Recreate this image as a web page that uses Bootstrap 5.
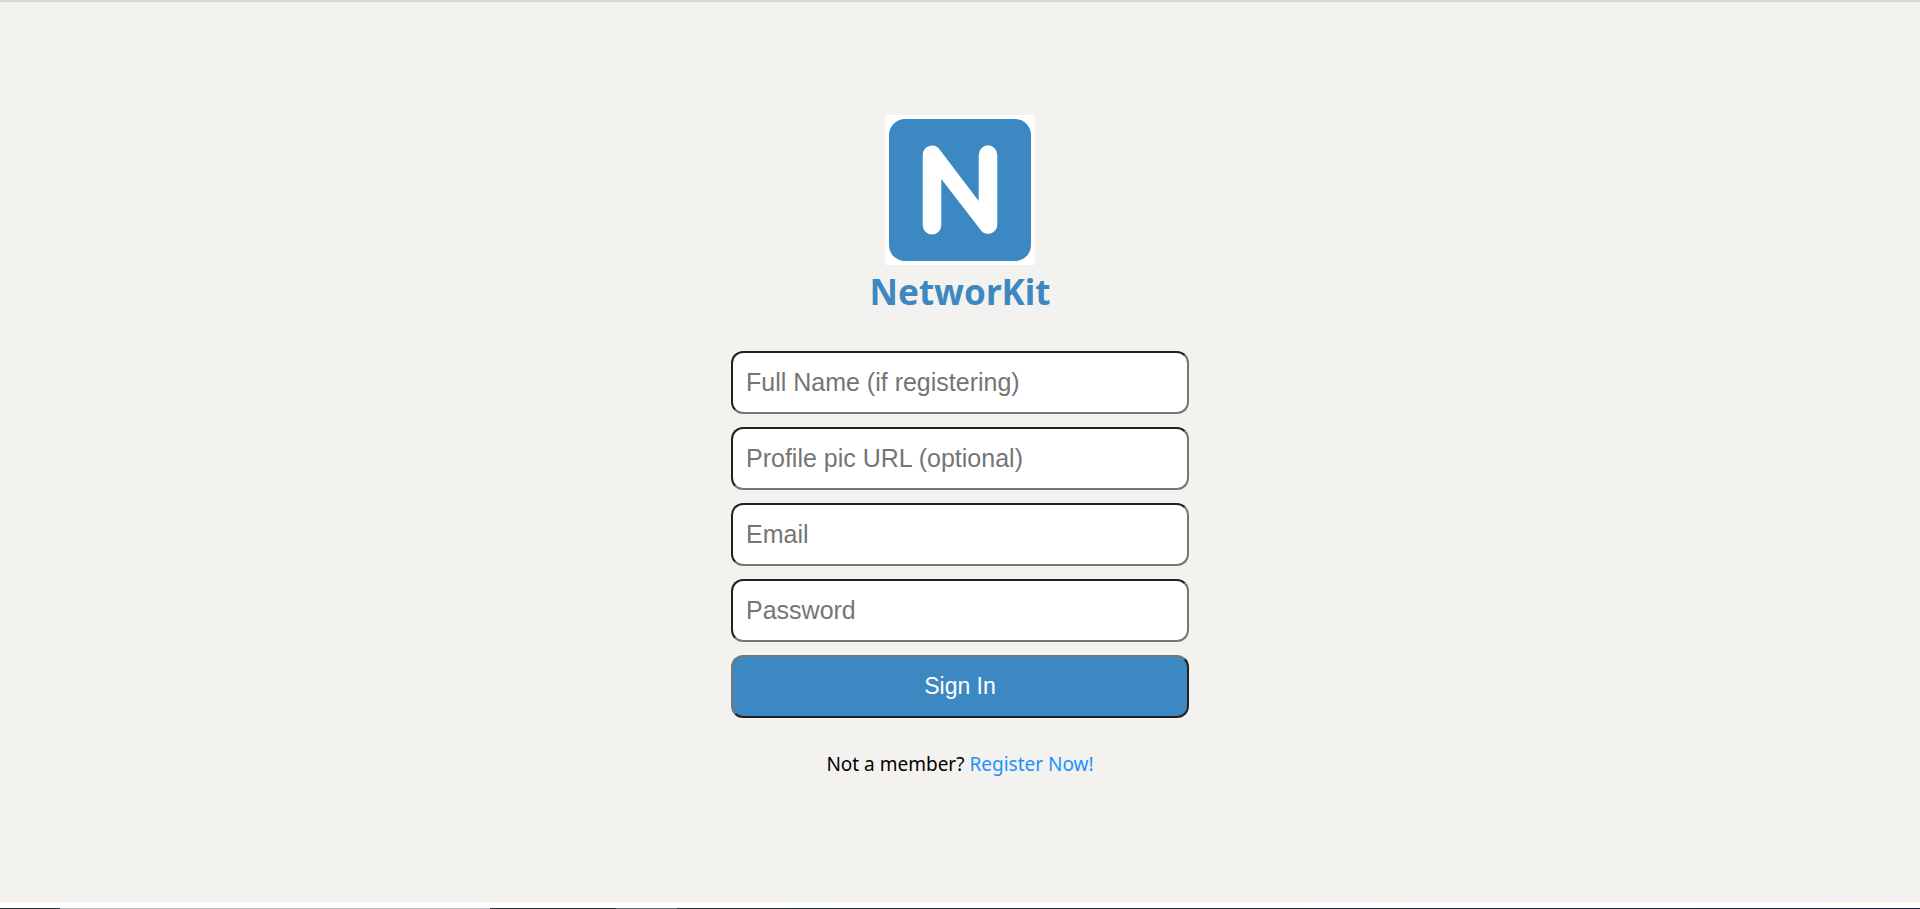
<!DOCTYPE html>
<html lang="en">
<head>
<meta charset="utf-8">
<meta name="viewport" content="width=device-width, initial-scale=1">
<title>NetworKit</title>
<link href="https://cdn.jsdelivr.net/npm/bootstrap@5.3.0/dist/css/bootstrap.min.css" rel="stylesheet">
<style>
  :root { --brand: #3c88c2; }
  body { font-family: "Noto Sans", "Open Sans", sans-serif; background: #fff; color: #000; }
  .login-page { background: #f3f2ee; border-top: 2px solid #d5d7da; padding-top: 113px; }
  .login-logo { width: 150px; height: 150px; }
  .login-title { color: var(--brand); font-size: 35px; line-height: 54px; margin-bottom: 32px; }
  .login-form { width: 100%; max-width: 458px; gap: 13px; }
  .login-field, .login-button {
    height: 63px; border-width: 2px; border-radius: 12px;
    font-family: "Liberation Sans", Arial, sans-serif;
  }
  .login-field, .login-field:focus {
    padding: 0 13px; font-size: 25px; background: #fff;
    border-style: solid; border-color: #212121 #767676 #767676 #212121;
  }
  .login-field::placeholder { color: #757575; }
  .login-button, .login-button:hover {
    font-size: 23px; color: #fff; background: var(--brand);
    border-color: #767676 #212121 #212121 #767676;
  }
  .login-register { font-size: 19px; line-height: 28px; margin-top: 32px; }
  .login-register a { color: #1e90ff; }
  .taskbar-edge {
    height: 7px;
    background: linear-gradient(to right, #263238 60px, #c0c0c0 60px 490px, #263238 490px 616px, #5a6669 616px 677px, #263238 677px, #1c2233) bottom / 100% 1px no-repeat;
  }
</style>
</head>
<body class="d-flex flex-column min-vh-100">
<main class="login-page flex-grow-1 d-flex flex-column align-items-center px-3">
  <svg class="login-logo" viewBox="0 0 150 150" role="img" aria-label="NetworKit logo">
    <rect width="150" height="150" fill="#fff"/>
    <rect x="4" y="4" width="142" height="142" rx="16" fill="#3c88c2"/>
    <path d="M37.700 40a9.400 9.700 0 0 1 17.300-5L93.700 86V40a9.300 9.700 0 0 1 18.600 0V110a9.300 9.500 0 0 1-17 4.500L56.300 64V110a9.300 9.500 0 0 1-18.600 0Z" fill="#fff"/>
  </svg>
  <h1 class="login-title fw-bold">NetworKit</h1>
  <form class="login-form d-flex flex-column">
    <input class="login-field form-control" type="text" placeholder="Full Name (if registering)" aria-label="Full Name">
    <input class="login-field form-control" type="text" placeholder="Profile pic URL (optional)" aria-label="Profile pic URL">
    <input class="login-field form-control" type="email" placeholder="Email" aria-label="Email">
    <input class="login-field form-control" type="password" placeholder="Password" aria-label="Password">
    <button class="login-button btn w-100" type="submit">Sign In</button>
  </form>
  <p class="login-register mb-0">Not a member? <a class="text-decoration-none" href="#">Register Now!</a></p>
</main>
<footer class="taskbar-edge"></footer>
<script src="https://cdn.jsdelivr.net/npm/bootstrap@5.3.0/dist/js/bootstrap.bundle.min.js"></script>
</body>
</html>
